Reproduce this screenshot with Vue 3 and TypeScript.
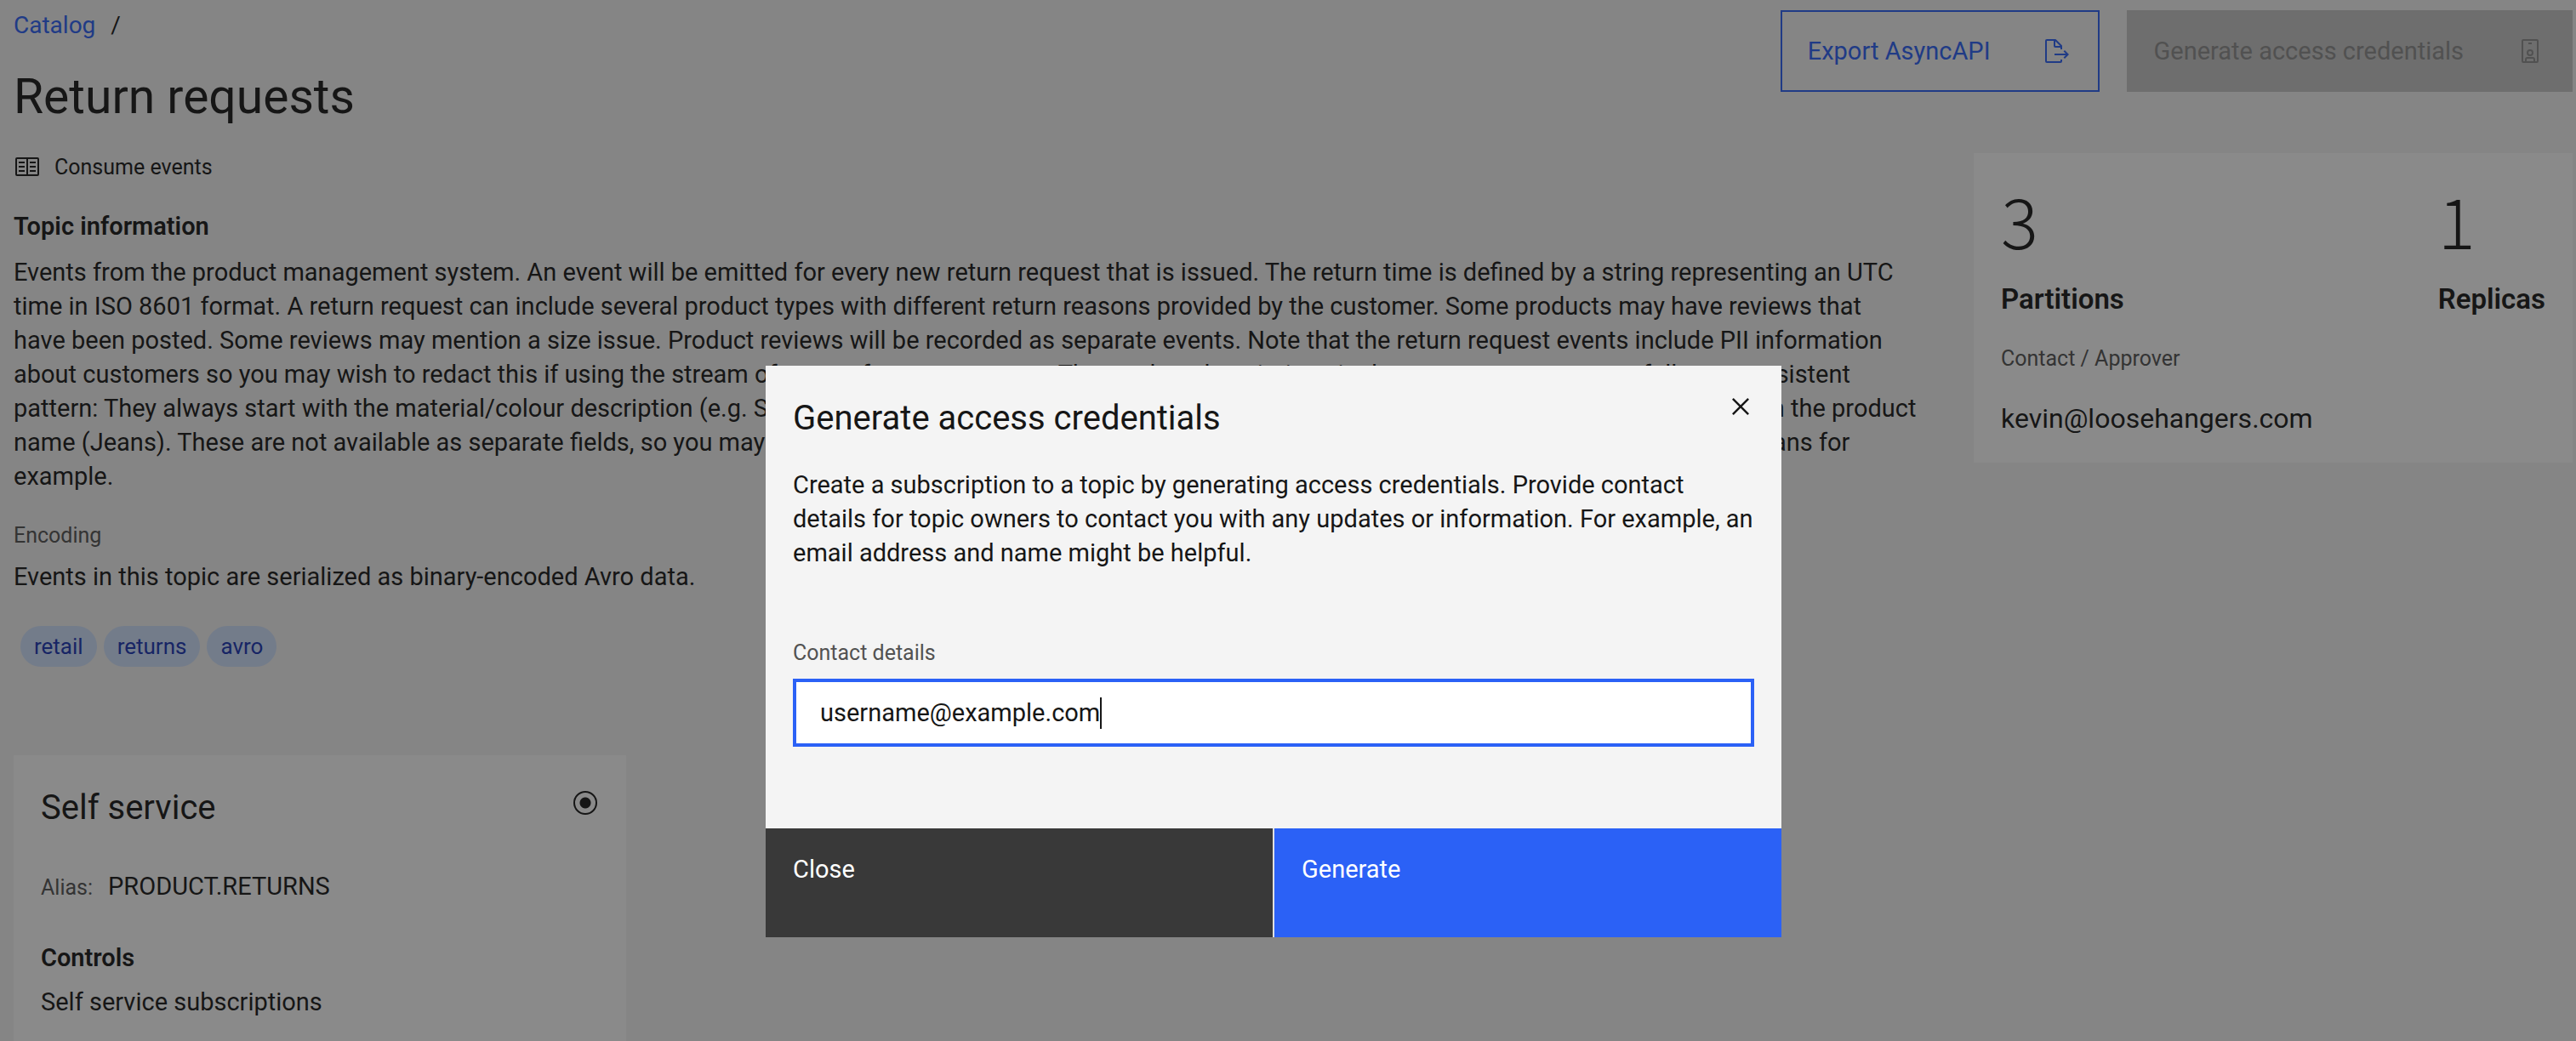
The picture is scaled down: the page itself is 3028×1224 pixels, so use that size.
<script setup lang="ts">
import { ref } from 'vue'

const contact = ref('username@example.com')
const tags = ['retail', 'returns', 'avro']
const description = [
  'Events from the product management system. An event will be emitted for every new return request that is issued. The return time is defined by a string representing an UTC',
  'time in ISO 8601 format. A return request can include several product types with different return reasons provided by the customer. Some products may have reviews that',
  'have been posted. Some reviews may mention a size issue. Product reviews will be recorded as separate events. Note that the return request events include PII information',
  'about customers so you may wish to redact this if using the stream of events for any purposes. The product descriptions in the return request events follow a consistent',
  'pattern: They always start with the material/colour description (e.g. Stonewashed), followed by the style (e.g. Bootcut), and will then always finish with the name in the product',
  'name (Jeans). These are not available as separate fields, so you may need to process the text of the description if you want to find the total number of returned jeans for',
  'example.',
]
</script>

<template>
  <div class="page">
    <header class="page-header">
      <div>
        <nav class="breadcrumb" aria-label="Breadcrumb">
          <a href="#catalog">Catalog</a><span>/</span>
        </nav>
        <h1>Return requests</h1>
      </div>
      <div class="actions">
        <button type="button" class="btn btn-outline">
          Export AsyncAPI
          <svg viewBox="0 0 32 32" aria-hidden="true">
            <path d="M13 21H26.17L23.59 23.59 25 25 30 20 25 15 23.59 16.41 26.17 19H13z" />
            <path d="M22 14V10a1 1 0 0 0-.29-.71l-7-7A1 1 0 0 0 14 2H4A2 2 0 0 0 2 4V28a2 2 0 0 0 2 2H20a2 2 0 0 0 2-2V26H20v2H4V4h8v6a2 2 0 0 0 2 2h6v2zM14 10V4.41L19.59 10z" />
          </svg>
        </button>
        <button type="button" class="btn btn-disabled" disabled>
          Generate access credentials
          <svg viewBox="0 0 32 32" aria-hidden="true">
            <path fill-rule="evenodd" d="M22 29H20V26a1 1 0 0 0-1-1H13a1 1 0 0 0-1 1v3H10V26a3 3 0 0 1 3-3h6a3 3 0 0 1 3 3zM16 22a4 4 0 1 1 4-4A4 4 0 0 1 16 22zm0-6a2 2 0 1 0 2 2A2 2 0 0 0 16 16zM14 6h4v2h-4z" />
            <path fill-rule="evenodd" d="M24 2H8A2 2 0 0 0 6 4V28a2 2 0 0 0 2 2H24a2 2 0 0 0 2-2V4A2 2 0 0 0 24 2zm0 26H8V4H24z" />
          </svg>
        </button>
      </div>
    </header>

    <div class="columns">
      <main>
        <div class="capability">
          <svg viewBox="0 0 32 32" aria-hidden="true">
            <path d="M19 10h7v2h-7zM19 15h7v2h-7zM19 20h7v2h-7zM6 10h7v2H6zM6 15h7v2H6zM6 20h7v2H6z" />
            <path fill-rule="evenodd" d="M28 5H4A2 2 0 0 0 2 7V25a2 2 0 0 0 2 2H28a2 2 0 0 0 2-2V7A2 2 0 0 0 28 5zM4 7H15V25H4zM17 25V7H28V25z" />
          </svg>
          <span>Consume events</span>
        </div>
        <h2 class="heading">Topic information</h2>
        <p class="description">
          <template v-for="(line, i) in description" :key="i">{{ line }}<br v-if="i < description.length - 1"></template>
        </p>
        <h3 class="label encoding">Encoding</h3>
        <p>Events in this topic are serialized as binary-encoded Avro data.</p>
        <ul class="tags">
          <li v-for="tag in tags" :key="tag">{{ tag }}</li>
        </ul>
        <section class="tile">
          <div class="tile-head">
            <h2><label for="self-service">Self service</label></h2>
            <input id="self-service" type="radio" name="plan" checked>
          </div>
          <p class="alias"><span class="label">Alias:</span><span>PRODUCT.RETURNS</span></p>
          <h3 class="heading">Controls</h3>
          <p class="subscriptions">Self service subscriptions</p>
        </section>
      </main>

      <aside class="summary">
        <dl class="stats">
          <div><dd>3</dd><dt>Partitions</dt></div>
          <div><dd>1</dd><dt>Replicas</dt></div>
        </dl>
        <p class="label approver">Contact / Approver</p>
        <p class="email">kevin@loosehangers.com</p>
      </aside>
    </div>

    <div class="overlay">
      <section class="modal" role="dialog" aria-modal="true" aria-labelledby="modal-title">
        <button type="button" class="dismiss" aria-label="Dismiss">
          <svg viewBox="0 0 32 32" aria-hidden="true">
            <path d="M24 9.4L22.6 8 16 14.6 9.4 8 8 9.4 14.6 16 8 22.6 9.4 24 16 17.4 22.6 24 24 22.6 17.4 16z" />
          </svg>
        </button>
        <div class="modal-body">
          <h2 id="modal-title">Generate access credentials</h2>
          <p>
            Create a subscription to a topic by generating access credentials. Provide contact<br>
            details for topic owners to contact you with any updates or information. For example, an<br>
            email address and name might be helpful.
          </p>
          <label class="label" for="contact">Contact details</label>
          <div class="field">
            <input id="contact" v-model="contact" type="text"><span class="caret"></span>
          </div>
        </div>
        <footer>
          <button type="button" class="close">Close</button>
          <button type="button" class="generate">Generate</button>
        </footer>
      </section>
    </div>
  </div>
</template>

<style>
body {
  overflow: hidden;
  background: #f4f4f4;
}
</style>

<style scoped>
.page, .page * {
  box-sizing: border-box;
}
.page {
  display: flex;
  flex-direction: column;
  min-height: 100vh;
  padding: 12px 4px 0 16px;
  background: #f4f4f4;
  color: #161616;
  font: 400 29px/40px Roboto, "Liberation Sans", sans-serif;
}
h1, h2, h3, p, dl, dd, ul {
  margin: 0;
  padding: 0;
}
button, input {
  margin: 0;
  font: inherit;
}
svg {
  display: block;
  flex: none;
  width: 32px;
  height: 32px;
  fill: currentColor;
}
.page-header {
  display: flex;
  justify-content: space-between;
  align-items: flex-start;
  margin-bottom: 30px;
}
.breadcrumb {
  display: flex;
  gap: 18px;
  font-size: 28px;
  line-height: 36px;
}
.breadcrumb a {
  color: #2b61f6;
  text-decoration: none;
}
h1 {
  margin-top: 30px;
  font-size: 57px;
  font-weight: 400;
  line-height: 72px;
}
.actions {
  display: flex;
  gap: 32px;
}
.btn {
  display: flex;
  align-items: center;
  justify-content: space-between;
  gap: 62px;
  height: 96px;
  padding: 0 32px 0 30px;
  border: 2px solid #2b61f6;
  background: none;
  color: #2b61f6;
}
.btn-disabled {
  border-color: #c6c6c6;
  background: #c6c6c6;
  color: #8d8d8d;
}
.columns {
  display: flex;
  flex: 1;
  justify-content: space-between;
}
main {
  display: flex;
  flex: 1;
  flex-direction: column;
  min-width: 0;
}
.capability {
  display: flex;
  gap: 16px;
  font-size: 25px;
  line-height: 34px;
}
.heading {
  font-size: 29px;
  font-weight: 600;
  line-height: 40px;
}
.capability + .heading {
  margin: 32px 0 14px;
}
.description {
  white-space: nowrap;
}
.label {
  color: #525252;
  font-size: 25px;
  font-weight: 400;
  line-height: 32px;
}
.encoding {
  margin: 34px 0 12px;
}
.tags {
  display: flex;
  gap: 8px;
  margin: 38px 0 104px 8px;
  list-style: none;
}
.tags li {
  padding: 0 16px;
  border-radius: 24px;
  background: #d0e2ff;
  color: #1834b4;
  font-size: 26px;
  line-height: 48px;
}
.tile {
  flex: 1;
  width: 720px;
  max-width: 100%;
  padding: 34px 32px 32px;
  background: #fff;
}
.tile-head {
  display: flex;
  justify-content: space-between;
  align-items: flex-start;
}
.tile-head h2 {
  font-size: 40px;
  font-weight: 400;
  line-height: 56px;
}
.tile-head input {
  appearance: none;
  width: 28px;
  height: 28px;
  margin: 8px 2px 0 0;
  border: 2px solid #161616;
  border-radius: 50%;
  background: radial-gradient(circle, #161616 6px, transparent 7px);
}
.alias {
  display: flex;
  align-items: baseline;
  gap: 18px;
  margin: 44px 0;
}
.subscriptions {
  margin-top: 12px;
}
.summary {
  align-self: flex-start;
  width: 704px;
  padding: 32px;
  background: #fff;
}
.stats {
  display: flex;
  justify-content: space-between;
}
.stats dd {
  margin-bottom: 28px;
  font: 300 82px/92px "Noto Sans CJK JP", sans-serif;
}
.stats dt {
  font-size: 33px;
  font-weight: 600;
}
.approver, .email {
  margin-top: 34px;
}
.email {
  font-size: 32px;
}
.overlay {
  position: fixed;
  inset: 0;
  display: flex;
  align-items: center;
  justify-content: center;
  padding: 308px 34px 0 0;
  background: rgba(22, 22, 22, 0.5);
}
.modal {
  position: relative;
  width: 100%;
  max-width: 1194px;
  background: #f4f4f4;
}
.modal-body {
  padding: 34px 32px 96px;
}
.modal-body h2 {
  margin-bottom: 30px;
  font-size: 40px;
  font-weight: 400;
  line-height: 56px;
}
.modal-body p {
  white-space: nowrap;
}
.modal-body .label {
  display: block;
  margin: 82px 0 14px;
}
.field {
  display: flex;
  align-items: center;
  height: 80px;
  padding: 0 28px;
  border: 4px solid #2b61f6;
  background: #fff;
}
.field input {
  field-sizing: content;
  padding: 0;
  border: 0;
  outline: 0;
  background: none;
  color: #161616;
}
.caret {
  width: 2px;
  height: 37px;
  background: #161616;
}
.dismiss {
  position: absolute;
  top: 0;
  right: 0;
  display: flex;
  align-items: center;
  justify-content: center;
  width: 96px;
  height: 96px;
  padding: 0;
  border: 0;
  background: none;
  color: #161616;
}
.dismiss svg {
  width: 40px;
  height: 40px;
}
footer {
  display: flex;
  gap: 2px;
  background: #e0e0e0;
}
footer button {
  display: flex;
  flex: 1;
  align-items: flex-start;
  height: 128px;
  padding: 28px 32px;
  border: 0;
  color: #fff;
}
.close {
  background: #393939;
}
.generate {
  background: #2b61f6;
}
</style>
